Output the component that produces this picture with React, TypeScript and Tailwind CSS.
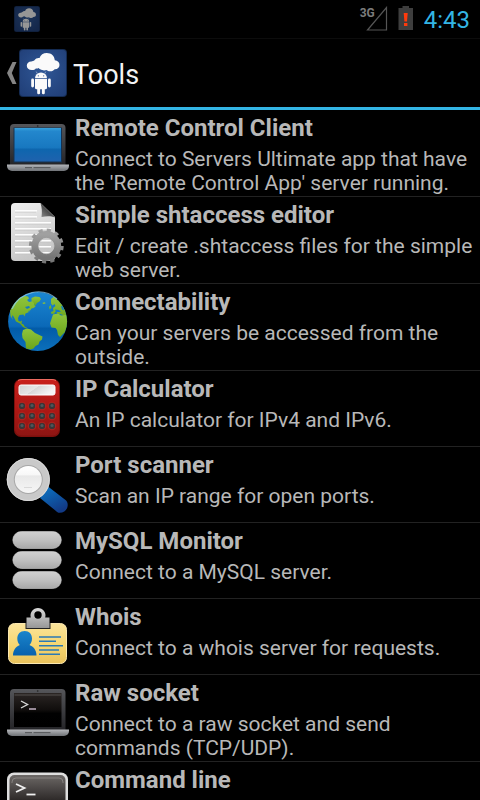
import React from "react"

interface Tool {
  name: string
  description?: string
  icon: React.ReactNode
}

const AppIcon: React.FC<{ className: string }> = ({ className }) => (
  <svg viewBox="0 0 48 48" className={className} aria-hidden="true">
    <defs>
      <radialGradient id="appBg" cx="0.5" cy="0.45" r="0.7">
        <stop offset="0" stopColor="#2f5796" />
        <stop offset="1" stopColor="#213f78" />
      </radialGradient>
    </defs>
    <rect width="48" height="48" rx="4" fill="#142b52" />
    <rect x="1" y="1" width="46" height="46" rx="3" fill="url(#appBg)" />
    <path
      d="M15.500 11.300c1.200-1.800 3-2.500 5-2.200C21.500 5.800 24.300 4 27.800 4c4.500 0 7.700 2.800 8 7.300 2.800.3 4.700 2 4.700 4.700 0 2.600-2 4.300-4.800 4.200-1.200 1.500-3 2.300-4.900 2-1.500-.1-2.500-.6-3.300-1.300-1.200.5-2.700.7-4.200.2-1.500-.3-2.800-.9-3.700-2-.8.5-1.800.6-2.800.4-.8 1.200-2.200 1.700-4 1.600-3-.2-5-2-5-4.400 0-2.700 2-4.400 4.600-4.300 1 0 2.200-.3 3.100-1.100z"
      fill="#fafafa"
    />
    <g fill="#fafafa">
      <path d="M16 29.200a6 5.600 0 0 1 12 0z" />
      <path d="M16 30h12v8.700a1.600 1.600 0 0 1-1.600 1.600h-8.800a1.600 1.600 0 0 1-1.600-1.600z" />
      <rect x="12.200" y="29.500" width="2.800" height="9" rx="1.400" />
      <rect x="29" y="29.500" width="2.800" height="9" rx="1.400" />
      <rect x="18.200" y="38" width="2.900" height="7.300" rx="1.400" />
      <rect x="22.900" y="38" width="2.900" height="7.300" rx="1.400" />
    </g>
    <path d="M18.500 24.800l-1.300-2.200M25.500 24.800l1.300-2.200" stroke="#c8d2e6" strokeWidth="0.600" />
    <circle cx="19.300" cy="26.800" r="0.600" fill="#2b5190" />
    <circle cx="24.700" cy="26.800" r="0.600" fill="#2b5190" />
  </svg>
)

const ToolIcon: React.FC<{ children: React.ReactNode }> = ({ children }) => (
  <svg viewBox="0 0 75 75" className="h-[75px] w-[75px] shrink-0" aria-hidden="true">
    {children}
  </svg>
)

const LaptopBody: React.FC = () => (
  <>
    <defs>
      <linearGradient id="lid" x1="0" y1="0" x2="0" y2="1">
        <stop offset="0" stopColor="#55565a" />
        <stop offset="1" stopColor="#232326" />
      </linearGradient>
      <linearGradient id="base" x1="0" y1="0" x2="0" y2="1">
        <stop offset="0" stopColor="#b4b6ba" />
        <stop offset="1" stopColor="#6f7276" />
      </linearGradient>
    </defs>
    <path d="M10 56V18a4 4 0 0 1 4-4h47.500a4 4 0 0 1 4 4v38z" fill="url(#lid)" />
    <circle cx="37.700" cy="16" r="0.800" fill="#222" />
    <path d="M7 54.500h62v1.500a5 5 0 0 1-5 5H12a5 5 0 0 1-5-5z" fill="url(#base)" />
    <path d="M25 57.700h7M33.500 57.700h17" stroke="#4d4f52" strokeWidth="1" />
  </>
)

const LaptopIcon: React.FC = () => (
  <ToolIcon>
    <LaptopBody />
    <defs>
      <linearGradient id="screen" x1="0" y1="0" x2="0" y2="1">
        <stop offset="0" stopColor="#36a0dc" />
        <stop offset="0.1" stopColor="#2387cd" />
        <stop offset="0.58" stopColor="#1878c0" />
        <stop offset="0.64" stopColor="#0e66ae" />
        <stop offset="1" stopColor="#1f62ae" />
      </linearGradient>
    </defs>
    <rect x="13.500" y="17.500" width="48.500" height="35" fill="#17324f" />
    <rect x="14.500" y="18" width="46.500" height="33.500" fill="url(#screen)" />
  </ToolIcon>
)

const RawSocketIcon: React.FC = () => (
  <ToolIcon>
    <LaptopBody />
    <defs>
      <linearGradient id="darkScreen" x1="0" y1="0" x2="0" y2="1">
        <stop offset="0" stopColor="#2b2624" />
        <stop offset="0.5" stopColor="#100d0c" />
        <stop offset="0.6" stopColor="#010101" />
        <stop offset="1" stopColor="#000" />
      </linearGradient>
    </defs>
    <rect x="14" y="18" width="47.500" height="34" fill="url(#darkScreen)" />
    <path d="M14.500 20h46.500" stroke="#55504e" strokeWidth="1" />
    <path d="M21 26l6.500 3.500-6.500 3.500" fill="none" stroke="#d8d8d8" strokeWidth="1.400" />
    <path d="M29 34h7" stroke="#b9a9b9" strokeWidth="1.600" />
  </ToolIcon>
)

const EditorIcon: React.FC = () => (
  <ToolIcon>
    <defs>
      <linearGradient id="paper" x1="0" y1="0" x2="0.3" y2="1">
        <stop offset="0" stopColor="#efefef" />
        <stop offset="1" stopColor="#c6c6c6" />
      </linearGradient>
      <linearGradient id="fold" x1="0" y1="1" x2="0.6" y2="0.4">
        <stop offset="0" stopColor="#8c8c8c" />
        <stop offset="1" stopColor="#3c3c3c" />
      </linearGradient>
      <linearGradient id="gear" x1="0" y1="0" x2="0" y2="1">
        <stop offset="0" stopColor="#a0a0a0" />
        <stop offset="1" stopColor="#757575" />
      </linearGradient>
    </defs>
    <path d="M11 10a4 4 0 0 1 4-4h25.500L55 20v40a4 4 0 0 1-4 4H15a4 4 0 0 1-4-4z" fill="url(#paper)" />
    <path d="M40.500 6L55 20.500c-3.500-1.500-8-1.700-13.500-.5.700-5 .4-9.500-1-14z" fill="url(#fold)" />
    <path
      d="M15 15h21M15 21h21M15 27h36M15 33h36M15 39h36M15 45h36M15 51h36M15 57h36"
      stroke="#c4c4c4"
      strokeWidth="0.800"
    />
    <path
      d="M15 13.800h22M15 19.800h22M15 25.800h36M15 31.800h36M15 37.800h36M15 43.800h36M15 49.800h36M15 55.800h36"
      stroke="#fdfdfd"
      strokeWidth="1.500"
    />
    <g fill="none" stroke="url(#gear)">
      <circle cx="46.300" cy="49" r="11.300" strokeWidth="7.200" />
      <circle cx="46.300" cy="49" r="15.800" strokeWidth="3.200" strokeDasharray="4.136 4.136" />
    </g>
    <circle cx="46.300" cy="49" r="7.700" fill="none" stroke="#cfcfcf" strokeWidth="0.700" />
  </ToolIcon>
)

const GlobeIcon: React.FC = () => (
  <ToolIcon>
    <defs>
      <linearGradient id="sea" x1="0" y1="0" x2="0" y2="1">
        <stop offset="0" stopColor="#1b87d2" />
        <stop offset="0.58" stopColor="#0b69b8" />
        <stop offset="0.62" stopColor="#025ba8" />
        <stop offset="1" stopColor="#0c70bb" />
      </linearGradient>
      <linearGradient id="land" x1="0" y1="0" x2="0" y2="1">
        <stop offset="0" stopColor="#8fc43c" />
        <stop offset="1" stopColor="#6ba51b" />
      </linearGradient>
      <clipPath id="globeClip">
        <circle cx="37.600" cy="37.500" r="29.500" />
      </clipPath>
    </defs>
    <circle cx="37.600" cy="37.500" r="29.500" fill="url(#sea)" />
    <g fill="url(#land)" clipPath="url(#globeClip)">
      <path d="M22 13l3-1 3 .5 1 2-2 1.500 2 2 2.500-.5 1-2.500 2 2.500-.5 3 1.500 2-2 1.500-2 .5-2.500 3.500-3.500 1.500-1 3-1-2-4 .5-1.500 3 .5 3 2 .5 1.500-1-.5 3 2 1 1.500 2.500 2 .5-1 1-3-1.500-3-3.500-4-2-2.200-4.500-1.300-2-.5 2 1 3-2.500-4-.5-6c1-6 4-10 9.500-13z" />
      <path d="M31.500 14l3.500-1.500 4.500.5 1.500 2-1.500 2.500-2.500 1.500-2 3-1.500-3.500-2-2z" />
      <path d="M42.500 18.800l2.500-.5.5 1.300-2.500.5zM49 23l1.500-2 1 3-2 1.500z" />
      <path d="M51 15l3-2.500 8 6 4 9 1 7-2 .5-2-4-3-1-1.500 1-2-3-1.500-.5-.5 2-3 .5-.5-2 2.500-1-.5-3 2.500-2-1-2-2 1.500-1.500-2z" />
      <path d="M53 30.500l5-1 3 2 5-.5 2 9-3 8-5 5-2-2-1-5-1.500-2-4-.5-1.500-4z" />
      <path d="M23 46l4-1.500 4 1 4 3.500 7.500 3.500-.5 3-2.500 2-1 3-3 1.500-2 2.500-3 1-4.500-1-.5-6.500-3-4-.5-4z" />
    </g>
    <path
      d="M25 23l4-1 1 1.500-3 1.500zM55 25.500l4 .5 2 2-5 0zM61 22l2 .5 1 4-2-1zM28 27l2-.5-1 1.500z"
      fill="#1479c2"
    />
    <path d="M12 25a28.500 28.500 0 0 1 45-10" fill="none" stroke="#8fd0f5" strokeWidth="1.200" opacity="0.700" />
  </ToolIcon>
)

const CalculatorIcon: React.FC = () => (
  <ToolIcon>
    <defs>
      <linearGradient id="calc" x1="0" y1="0" x2="0" y2="1">
        <stop offset="0" stopColor="#c8201b" />
        <stop offset="0.58" stopColor="#ab1714" />
        <stop offset="1" stopColor="#8d1513" />
      </linearGradient>
      <linearGradient id="lcd" x1="0" y1="0" x2="1" y2="0.4">
        <stop offset="0" stopColor="#d2d2d2" />
        <stop offset="0.5" stopColor="#e6e6e6" />
        <stop offset="0.520" stopColor="#d8d8d8" />
        <stop offset="1" stopColor="#f4f4f4" />
      </linearGradient>
    </defs>
    <rect x="14" y="8" width="46" height="58" rx="7" fill="#7d100d" />
    <rect x="15" y="8.500" width="44" height="56" rx="6.500" fill="url(#calc)" />
    <path d="M18 9.500q2-1 4-1h30q2 0 4 1" fill="none" stroke="#ee6b60" strokeWidth="1" />
    <rect x="19" y="14" width="36" height="10" rx="2" fill="url(#lcd)" stroke="#fff" strokeWidth="1" />
    {[35, 45, 55].map((cy) =>
      [22, 32, 42, 52].map((cx) => (
        <g key={`${cx}-${cy}`}>
          <circle cx={cx} cy={cy} r="3.800" fill="#8c1412" stroke="#c8382f" strokeWidth="0.500" />
          <circle cx={cx} cy={cy} r="3" fill="#35393b" />
          <circle cx={cx} cy={cy - 0.5} r="1.500" fill="#50565a" />
        </g>
      ))
    )}
  </ToolIcon>
)

const ScannerIcon: React.FC = () => (
  <ToolIcon>
    <defs>
      <linearGradient id="handle" x1="0" y1="0" x2="0.6" y2="1">
        <stop offset="0" stopColor="#0a78c8" />
        <stop offset="1" stopColor="#123a86" />
      </linearGradient>
      <linearGradient id="lens" x1="0" y1="0" x2="0" y2="1">
        <stop offset="0" stopColor="#fff" />
        <stop offset="0.340" stopColor="#f7f7f7" />
        <stop offset="0.360" stopColor="#e8e8e8" />
        <stop offset="1" stopColor="#f6f6f6" />
      </linearGradient>
    </defs>
    <path d="M48 39.500l17.500 13.500c5 4.500 1 13-6 12.800-1.500 0-2.500-.8-3.500-1.800L40 51z" fill="url(#handle)" />
    <circle cx="28.300" cy="32.500" r="21.600" fill="#c9c9c9" />
    <circle cx="28.300" cy="32.500" r="21" fill="none" stroke="#dadada" strokeWidth="1" />
    <circle cx="28.300" cy="32.500" r="14.500" fill="#a7a7a7" />
    <circle cx="28.300" cy="32.500" r="13.500" fill="url(#lens)" />
    <path d="M24 40.500h8" stroke="#cfcfcf" strokeWidth="0.700" />
  </ToolIcon>
)

const DatabaseIcon: React.FC = () => (
  <ToolIcon>
    <defs>
      <linearGradient id="disk" x1="0" y1="0" x2="0" y2="1">
        <stop offset="0" stopColor="#d0d0d0" />
        <stop offset="0.500" stopColor="#c0c0c0" />
        <stop offset="1" stopColor="#a8a8a8" />
      </linearGradient>
    </defs>
    {[8, 28, 48].map((y) => (
      <rect key={y} x="12.800" y={y + 0.5} width="48.500" height="17" rx="8.500" fill="url(#disk)" stroke="#d0d0d0" strokeWidth="0.600" />
    ))}
  </ToolIcon>
)

const WhoisIcon: React.FC = () => (
  <ToolIcon>
    <defs>
      <linearGradient id="card" x1="0" y1="0" x2="0" y2="1">
        <stop offset="0" stopColor="#fbe49b" />
        <stop offset="0.550" stopColor="#f6d670" />
        <stop offset="1" stopColor="#e9c25c" />
      </linearGradient>
      <linearGradient id="clip" x1="0" y1="0" x2="0" y2="1">
        <stop offset="0" stopColor="#d8d8d8" />
        <stop offset="1" stopColor="#979797" />
      </linearGradient>
      <linearGradient id="person" x1="0" y1="0" x2="0" y2="1">
        <stop offset="0" stopColor="#1a85cc" />
        <stop offset="1" stopColor="#0861ad" />
      </linearGradient>
    </defs>
    <rect x="8.500" y="24.500" width="58" height="40" rx="6" fill="url(#card)" stroke="#fbe8b0" strokeWidth="1" />
    <path d="M25.500 30V24h25v6z" fill="#222" />
    <path
      fillRule="evenodd"
      d="M26.500 29V18.500h4.300a7.500 7.500 0 1 1 14.400 0h4.300V29zM38 19.700a3.700 3.700 0 1 0 0-7.400 3.700 3.700 0 0 0 0 7.400z"
      fill="url(#clip)"
    />
    <path
      d="M24.700 32c4.500 0 7.300 3 7.300 7.500 0 3-1 5-2.500 6.500 4 1.500 7 5 7 10.500H13c0-5.500 3-9 6.800-10.500-1.500-1.500-2.500-3.500-2.500-6.500 0-4.500 2.900-7.500 7.400-7.500z"
      fill="url(#person)"
    />
    <path d="M39 38h22M39 42.300h17M39 46.700h24M39 51h20M39 55.300h21" stroke="#2b7ab5" strokeWidth="1.600" />
  </ToolIcon>
)

const TerminalIcon: React.FC = () => (
  <ToolIcon>
    <defs>
      <linearGradient id="term" x1="0" y1="0" x2="0" y2="1">
        <stop offset="0" stopColor="#6c6866" />
        <stop offset="0.500" stopColor="#2d2928" />
        <stop offset="1" stopColor="#000" />
      </linearGradient>
    </defs>
    <rect x="7" y="10.500" width="61" height="56" rx="7" fill="#dedede" />
    <rect x="9.500" y="13" width="56" height="51" rx="5" fill="url(#term)" />
    <path d="M12 21v-1a4 4 0 0 1 4-4h43a4 4 0 0 1 4 4v1" fill="none" stroke="#8f8b89" strokeWidth="0.800" />
    <path d="M16 22l8.500 4-8.500 4" fill="none" stroke="#f0f0f0" strokeWidth="1.800" />
    <path d="M26.500 32.500h9" stroke="#f0f0f0" strokeWidth="1.800" />
  </ToolIcon>
)

const tools: Tool[] = [
  {
    name: "Remote Control Client",
    description:
      "Connect to Servers Ultimate app that have the 'Remote Control App' server running.",
    icon: <LaptopIcon />,
  },
  {
    name: "Simple shtaccess editor",
    description: "Edit / create .shtaccess files for the simple web server.",
    icon: <EditorIcon />,
  },
  {
    name: "Connectability",
    description: "Can your servers be accessed from the outside.",
    icon: <GlobeIcon />,
  },
  {
    name: "IP Calculator",
    description: "An IP calculator for IPv4 and IPv6.",
    icon: <CalculatorIcon />,
  },
  {
    name: "Port scanner",
    description: "Scan an IP range for open ports.",
    icon: <ScannerIcon />,
  },
  {
    name: "MySQL Monitor",
    description: "Connect to a MySQL server.",
    icon: <DatabaseIcon />,
  },
  {
    name: "Whois",
    description: "Connect to a whois server for requests.",
    icon: <WhoisIcon />,
  },
  {
    name: "Raw socket",
    description: "Connect to a raw socket and send commands (TCP/UDP).",
    icon: <RawSocketIcon />,
  },
  {
    name: "Command line",
    icon: <TerminalIcon />,
  },
]

const StatusBar: React.FC = () => (
  <div className="flex h-[38px] shrink-0 items-center justify-between pr-[10px] pl-[14px]">
    <AppIcon className="h-[26px] w-[26px] opacity-60" />
    <div className="flex items-center">
      <div className="relative mr-[10px]">
        <svg viewBox="0 0 28 26" className="h-[26px] w-7" aria-hidden="true">
          <path d="M26.500 1.500v22.500H7.500z" fill="none" stroke="#555" strokeWidth="1.200" />
        </svg>
        <span className="absolute top-0 left-0 text-xs leading-[14px] font-bold text-[#7c7c7c]">
          3G
        </span>
      </div>
      <svg viewBox="0 0 16 26" className="mr-[10px] h-[26px] w-4" aria-hidden="true">
        <path d="M4.500 0h6.500v2h4v22H.5V2h4z" fill="#3e3e3e" />
        <path d="M5.700 7h4l-.7 8.500H6.400z" fill="#ff3a0c" />
        <rect x="6" y="17" width="3.400" height="3" fill="#ff3a0c" />
      </svg>
      <span className="pt-0.5 text-2xl leading-7 text-[#33b5e5]">4:43</span>
    </div>
  </div>
)

const ToolRow: React.FC<{ tool: Tool }> = ({ tool }) => (
  <li className="border-b border-[#222]">
    <button type="button" className="flex w-full items-start text-left text-[#b8b8b8]">
      {tool.icon}
      <span className="block min-w-0 flex-1 pt-1">
        <span className="block text-2xl leading-7 font-bold">{tool.name}</span>
        {tool.description && (
          <span className="block pt-[5px] pb-px text-[21px] leading-6">{tool.description}</span>
        )}
      </span>
    </button>
  </li>
)

export default function App() {
  return (
    <div className="flex h-screen flex-col overflow-hidden bg-black font-['Roboto',sans-serif]">
      <StatusBar />
      <header className="shrink-0 border-t border-b-[3px] border-t-[#0c0c0c] border-b-[#33b5e5]">
        <button type="button" className="flex h-[68px] items-center pl-[7px] text-left">
          <svg viewBox="0 0 10 22" className="mr-0.5 h-[22px] w-[10px]" aria-hidden="true">
            <path d="M5.500 0h4L4.800 11l4.700 11h-4L0 11z" fill="#858585" />
          </svg>
          <AppIcon className="mr-1.5 h-12 w-12" />
          <h1 className="pt-1 text-[27px] leading-8 text-[#f3f3f3]">Tools</h1>
        </button>
      </header>
      <ul className="min-h-0 flex-1 overflow-hidden">
        {tools.map((tool) => (
          <ToolRow key={tool.name} tool={tool} />
        ))}
      </ul>
    </div>
  )
}
